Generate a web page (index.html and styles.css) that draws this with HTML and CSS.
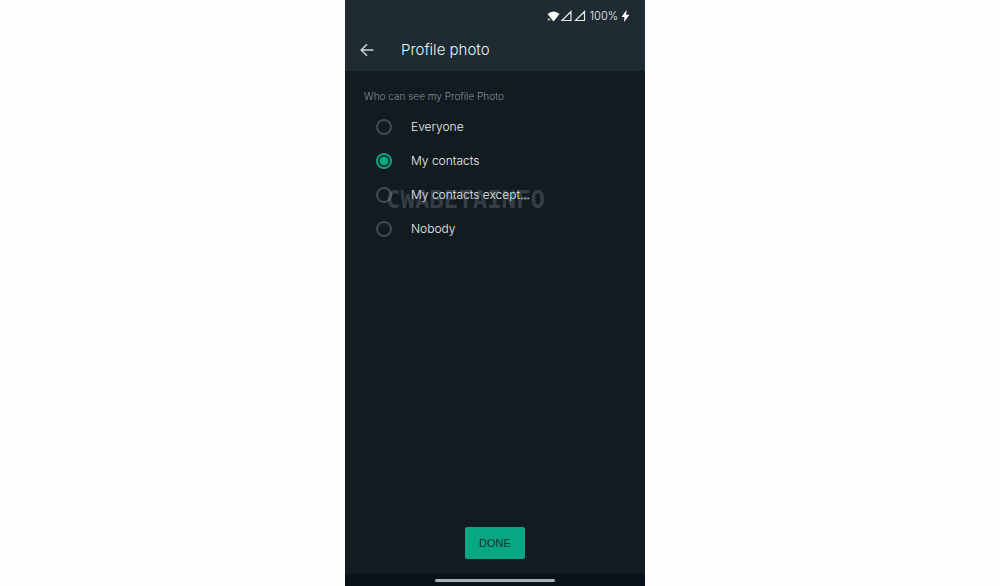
FILE: index.html
```html
<!DOCTYPE html>
<html lang="en">
  <head>
    <meta charset="utf-8">
    <meta name="viewport" content="width=device-width, initial-scale=1">
    <title>Profile photo</title>
    <link rel="stylesheet" href="styles.css">
  </head>

  <body>
    <div class="phone">
      <header class="top">
        <div class="status">
          <svg class="signals" width="40" height="12" viewBox="0 0 40 12" aria-hidden="true">
            <path d="M0.5 4 Q6.5 -1 12.5 4 L6.5 11.5 Z" fill="#fff"/>
            <path d="M1 8.5 L3 10.5 M3 8.5 L1 10.5" stroke="#fff" stroke-width="1"/>
            <path d="M15 10.5 H24 V1.5 Z M28.500 10.500 H37.500 V1.500 Z" fill="none" stroke="#e4e8ea" stroke-width="1.200"/>
          </svg>
          <span>100%</span>
          <svg width="9" height="12" viewBox="0 0 9 12" aria-hidden="true">
            <path d="M5.500 0 L0.500 7 H3.500 L3 12 L8.500 4.800 H5.200 Z" fill="#fff"/>
          </svg>
        </div>
        <div class="appbar">
          <a class="back" href="#" aria-label="Back">
            <svg width="14" height="14" viewBox="0 0 14 14">
              <path d="M13.500 7 H1.500 M7 1.200 L1.200 7 L7 12.800" fill="none" stroke="#cfd5d8" stroke-width="1.500"/>
            </svg>
          </a>
          <h1>Profile photo</h1>
        </div>
      </header>

      <form class="privacy">
        <fieldset>
          <legend>Who can see my Profile Photo</legend>
          <div class="options">
            <label><input type="radio" name="who">Everyone</label>
            <label><input type="radio" name="who" checked>My contacts</label>
            <label><input type="radio" name="who">My contacts except...</label>
            <label><input type="radio" name="who">Nobody</label>
            <span class="watermark">CWABETAINFO</span>
          </div>
        </fieldset>
        <button class="done" type="button">DONE</button>
      </form>

      <footer class="navbar"><div class="handle"></div></footer>
    </div>
  </body>
</html>
```
FILE: styles.css
```css
* {
	box-sizing: border-box;
}
body {
	margin: 0;
	padding-right: 10px;
	background: #fefefe;
	font-family: Inter, "Liberation Sans", sans-serif;
	font-weight: 300;
	color: #f0f3f4;
}
.phone {
	display: flex;
	flex-direction: column;
	width: 30%;
	min-width: 300px;
	min-height: 100vh;
	margin: 0 auto;
	background: #111b20;
}
.top {
	background: #1f2b32;
}
.status {
	display: flex;
	justify-content: flex-end;
	align-items: center;
	gap: 3px;
	padding: 8px 15px 0;
	font-size: 11px;
	line-height: 16px;
}
.appbar {
	display: flex;
	align-items: center;
	gap: 27px;
	padding: 14px 15px 10px;
}
.back {
	display: flex;
}
h1 {
	margin: 0;
	font-size: 15px;
	font-weight: 300;
	line-height: 23px;
}
.privacy {
	display: flex;
	flex: 1;
	flex-direction: column;
	justify-content: space-between;
	align-items: center;
	padding: 17px 19px 15px;
}
fieldset {
	width: 100%;
	margin: 0;
	padding: 0;
	border: 0;
}
legend {
	padding: 0;
	font-size: 10px;
	line-height: 16px;
	color: #84909a;
}
.options {
	position: relative;
	padding: 6px 12px;
}
.options label {
	display: flex;
	align-items: center;
	gap: 19px;
	font-size: 12px;
	line-height: 34px;
}
.options input {
	appearance: none;
	width: 16px;
	height: 16px;
	margin: 0;
	border: 2px solid #3f4a52;
	border-radius: 50%;
}
.options input:checked {
	border-color: #08a784;
	background: radial-gradient(circle, #08a784 4px, transparent 5px);
}
.watermark {
	position: absolute;
	top: 82px;
	left: 22px;
	font: bold 24px/28px "DejaVu Sans Mono", monospace;
	color: rgba(160, 170, 185, 0.25);
	pointer-events: none;
}
.done {
	width: 60px;
	height: 32px;
	padding: 0;
	border: 0;
	border-radius: 2px;
	background: #08a784;
	font: 11px "Liberation Sans", Arial, sans-serif;
	color: #10312f;
}
.navbar {
	display: flex;
	justify-content: center;
	padding: 5px 0 4px;
	background: #09111a;
}
.handle {
	width: 40%;
	height: 3px;
	border-radius: 2px;
	background: #a9aeb3;
}
```
